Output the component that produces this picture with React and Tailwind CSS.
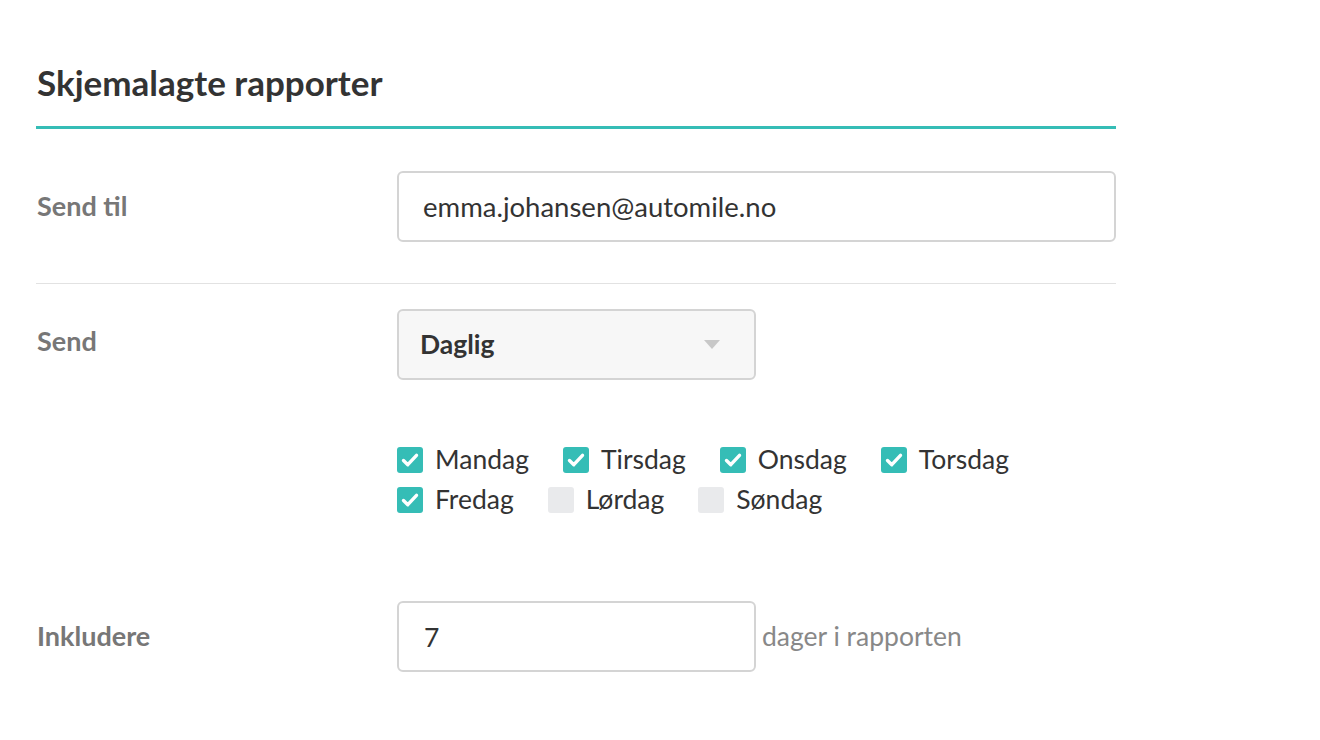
import { useState } from "react";

const DAYS = [
  { name: "Mandag", on: true },
  { name: "Tirsdag", on: true },
  { name: "Onsdag", on: true },
  { name: "Torsdag", on: true },
  { name: "Fredag", on: true },
  { name: "Lørdag", on: false },
  { name: "Søndag", on: false },
];

function Check({ label, checked, onToggle }) {
  return (
    <label className="inline-flex items-center mr-[34px] h-[40px] cursor-pointer" onClick={onToggle}>
      <span
        className={`w-[26px] h-[26px] rounded-[3px] flex items-center justify-center ${
          checked ? "bg-[#35bdb6]" : "bg-[#e9eaec]"
        }`}
      >
        {checked && (
          <svg width="26" height="26" viewBox="0 0 26 26" fill="none">
            <path d="M6.5 13.5l4.3 4.2 8.7-9.4" stroke="white" strokeWidth="3.4" strokeLinecap="round" strokeLinejoin="round" />
          </svg>
        )}
      </span>
      <span className="ml-[12px] text-[26.5px] text-[#333]">{label}</span>
    </label>
  );
}

export default function App() {
  const [days, setDays] = useState(DAYS);

  const toggle = (i) => setDays(days.map((d, j) => (j === i ? { ...d, on: !d.on } : d)));

  const row = (from, to) =>
    days.slice(from, to).map((d, k) => (
      <Check key={d.name} label={d.name} checked={d.on} onToggle={() => toggle(from + k)} />
    ));

  return (
    <div className="min-h-screen bg-white text-[#333]" style={{ fontFamily: "Lato, 'Noto Sans', sans-serif" }}>
      <div className="w-[1080px] ml-[36px] pt-[60px]">
        <h1 className="text-[35px] font-bold leading-[44px] pl-[1px] pb-[22px] border-b-[3px] border-[#35bdb6]">
          Skjemalagte rapporter
        </h1>

        {/* Send til */}
        <div className="flex items-center pt-[42px] pb-[41px] border-b border-[#e2e2e2]">
          <div className="w-[361px] pl-[1px] text-[27px] font-bold text-[#777]">Send til</div>
          <input
            defaultValue="emma.johansen@automile.no"
            className="flex-1 h-[71px] px-[24px] rounded-[6px] border-2 border-[#d4d4d4] text-[27.5px] text-[#333] outline-none"
          />
        </div>

        {/* Send */}
        <div className="flex pt-[25px]">
          <div className="w-[361px] pl-[1px] pt-[12px] text-[27px] font-bold text-[#777]">Send</div>
          <div>
            <div className="w-[359px] h-[71px] flex items-center justify-between pl-[21px] pr-[34px] rounded-[6px] border-2 border-[#d4d4d4] bg-[#f7f7f7]">
              <span className="text-[26.5px] font-bold text-[#333]">Daglig</span>
              <svg width="16" height="10" viewBox="0 0 16 10">
                <path d="M0 0h16L8 9z" fill="#c8c8c8" />
              </svg>
            </div>
            <div className="mt-[60px]">
              <div className="flex">{row(0, 4)}</div>
              <div className="flex">{row(4, 7)}</div>
            </div>
          </div>
        </div>

        {/* Inkludere */}
        <div className="flex items-center mt-[81px]">
          <div className="w-[361px] pl-[1px] text-[27px] font-bold text-[#777]">Inkludere</div>
          <input
            defaultValue="7"
            className="w-[359px] h-[71px] px-[25px] rounded-[6px] border-2 border-[#d4d4d4] text-[26.5px] text-[#333] outline-none"
          />
          <span className="ml-[6px] text-[26.5px] text-[#888]">dager i rapporten</span>
        </div>
      </div>
    </div>
  );
}
